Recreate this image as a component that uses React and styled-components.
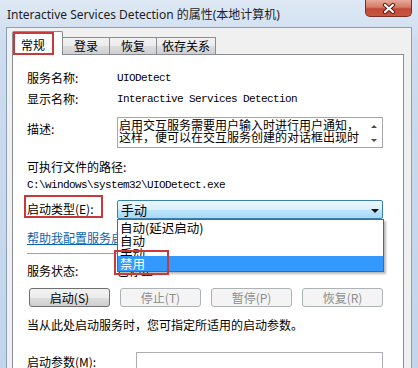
import React from "react";
import styled, { createGlobalStyle } from "styled-components";

const GlobalStyle = createGlobalStyle`
  html, body {
    margin: 0;
    padding: 0;
    overflow: hidden;
  }
  body {
    width: 418px;
    height: 368px;
    font-family: "Noto Sans CJK SC", "Noto Sans", sans-serif;
    font-size: 12px;
    color: #000;
  }
`;

const Window = styled.div`
  width: 418px;
  height: 368px;
  display: flex;
  flex-direction: column;
  background: linear-gradient(to bottom, #dfe9f5 0%, #cddcee 12%, #c2d5eb 100%);
  overflow: hidden;
`;

const TitleBar = styled.div`
  height: 27px;
  flex: none;
  display: flex;
  justify-content: space-between;
  align-items: flex-start;
  padding-left: 7px;
`;

const Title = styled.span`
  font-family: "Noto Sans", "Noto Sans CJK SC", sans-serif;
  font-size: 12px;
  line-height: 14px;
  margin-top: 8px;
  color: #1e1e1e;
`;

const CloseButton = styled.div`
  width: 47px;
  height: 17px;
  margin-right: 6px;
  box-sizing: border-box;
  border: 1px solid #7a3026;
  border-top: none;
  border-radius: 0 0 5px 5px;
  background: linear-gradient(to bottom, #e9a99b 0%, #d57a68 45%, #c24a37 55%, #c8563f 100%);
  display: flex;
  align-items: center;
  justify-content: center;
`;

const Client = styled.div`
  flex: 1;
  margin: 0 6px;
  border: 1px solid #8a9fb8;
  background: #f0f0f0;
  display: flex;
  flex-direction: column;
  padding: 0 7px 0 5px;
`;

const TabStrip = styled.div`
  display: flex;
  align-items: flex-end;
  height: 26px;
  flex: none;
`;

const Tab = styled.div`
  box-sizing: border-box;
  width: ${({ $w }) => $w}px;
  height: 17px;
  border: 1px solid #898c95;
  border-bottom: none;
  border-left: none;
  background: linear-gradient(to bottom, #f2f2f2 0%, #ebebeb 50%, #dddddd 51%, #cfcfcf 100%);
  display: flex;
  align-items: center;
  justify-content: center;
  line-height: 14px;
`;

const ActiveTab = styled.div`
  box-sizing: border-box;
  width: 51px;
  height: 24px;
  margin-bottom: -1px;
  position: relative;
  z-index: 1;
  border: 1px solid #898c95;
  border-bottom: none;
  border-radius: 2px 2px 0 0;
  background: #fff;
  display: flex;
  align-items: flex-start;
`;

const MarkBox = styled.span`
  box-sizing: border-box;
  border: 2px solid #c9393c;
  display: inline-flex;
  align-items: center;
`;

const TabMark = styled(MarkBox)`
  width: 41px;
  height: 23px;
  padding-left: 6px;
  padding-top: 2px;
  line-height: 14px;
`;

const Panel = styled.div`
  flex: 1;
  background: #fff;
  border: 1px solid #898c95;
  padding: 0 20px 0 14px;
  display: flex;
  flex-direction: column;
`;

const Row = styled.div`
  display: flex;
  align-items: ${({ $align }) => $align || "center"};
  margin-top: ${({ $mt }) => $mt}px;
  line-height: 14px;
`;

const Label = styled.div`
  width: ${({ $w }) => $w || 90}px;
  flex: none;
  padding-top: ${({ $pt }) => $pt || 0}px;
  white-space: nowrap;
`;

const Mono = styled.span`
  font-family: "Liberation Mono", "DejaVu Sans Mono", monospace;
  font-size: 11px;
  letter-spacing: -0.6px;
  line-height: 14px;
  white-space: nowrap;
`;

const TextLine = styled.div`
  margin-top: ${({ $mt }) => $mt}px;
  line-height: 14px;
  white-space: nowrap;
`;

const DescBox = styled.div`
  flex: 1;
  height: 31px;
  box-sizing: border-box;
  border: 1px solid #a5a7ad;
  display: flex;
  background: #fff;
`;

const DescText = styled.div`
  flex: 1;
  padding: 1px 0 0 1px;
  font-size: 12px;
  line-height: 12px;
  white-space: nowrap;
`;

const ScrollCol = styled.div`
  width: 17px;
  display: flex;
  flex-direction: column;
  justify-content: space-between;
  align-items: center;
  padding: 7px 0 5px;
`;

const Arrow = styled.div`
  width: 0;
  height: 0;
  border-left: 3px solid transparent;
  border-right: 3px solid transparent;
  ${({ $up }) =>
    $up ? "border-bottom: 3px solid #4d4d4d;" : "border-top: 3px solid #4d4d4d;"}
`;

const StartLabel = styled(MarkBox)`
  height: 23px;
  width: 79px;
  margin-left: -3px;
  padding: 5px 0 0 1px;
  line-height: 14px;
  white-space: nowrap;
`;

const ComboWrap = styled.div`
  position: relative;
  flex: 1;
  margin-left: 14px;
  margin-top: 5px;
`;

const Combo = styled.div`
  height: 19px;
  box-sizing: border-box;
  border: 1px solid #3c7fb1;
  border-radius: 2px;
  background: linear-gradient(to bottom, #eaf6fd 0%, #d9f0fc 50%, #bee6fd 51%, #a7d9f5 100%);
  display: flex;
  align-items: center;
  justify-content: space-between;
  padding: 0 3px 0 3px;
  font-size: 13px;
  line-height: 16px;
`;

const DownArrow = styled.div`
  width: 0;
  height: 0;
  border-left: 4px solid transparent;
  border-right: 4px solid transparent;
  border-top: 4px solid #111;
  margin-top: 2px;
`;

const DropList = styled.div`
  position: absolute;
  top: 100%;
  left: 0;
  width: 267px;
  box-sizing: border-box;
  border: 1px solid #646464;
  background: #fff;
  box-shadow: 2px 2px 2px rgba(0, 0, 0, 0.28);
  padding-top: 1px;
  z-index: 5;
`;

const Option = styled.div`
  height: ${({ $h }) => $h || 13}px;
  line-height: ${({ $h }) => $h || 13}px;
  padding-left: 2px;
  font-size: 12.5px;
  white-space: nowrap;
  ${({ $selected }) =>
    $selected &&
    `
    position: relative;
    margin-top: -4px;
    background: #3399ff;
    color: #fff;
  `}
`;

const OptionMark = styled.div`
  position: absolute;
  left: -4px;
  top: 30px;
  width: 55px;
  height: 25px;
  box-sizing: border-box;
  border: 2px solid #c9393c;
`;

const HelpLink = styled.a`
  color: #0b66b0;
  text-decoration: underline;
  white-space: nowrap;
`;

const Separator = styled.div`
  height: 1px;
  margin-top: 8px;
  background: #a0a0a0;
`;

const ButtonRow = styled.div`
  display: flex;
  gap: 10px;
  margin-top: 10px;
  padding-left: 2px;
`;

const Button = styled.div`
  width: 81px;
  height: 19px;
  box-sizing: border-box;
  border: 1px solid ${({ $disabled }) => ($disabled ? "#adb2b5" : "#707070")};
  border-radius: 3px;
  background: ${({ $disabled }) =>
    $disabled
      ? "#f4f4f4"
      : "linear-gradient(to bottom, #f2f2f2 0%, #ebebeb 50%, #dddddd 51%, #cfcfcf 100%)"};
  color: ${({ $disabled }) => ($disabled ? "#8d8d8d" : "#000")};
  display: flex;
  align-items: center;
  justify-content: center;
  line-height: 14px;
`;

const ParamInput = styled.div`
  flex: 1;
  height: 20px;
  box-sizing: border-box;
  border: 1px solid #abadb3;
  background: #fff;
`;

const CloseGlyph = () => (
  <svg width="14" height="11" viewBox="0 0 14 11">
    <path d="M3 2 L11 9 M11 2 L3 9" stroke="#5a1b14" strokeWidth="4.2" strokeLinecap="round" />
    <path d="M3 2 L11 9 M11 2 L3 9" stroke="#ffffff" strokeWidth="2.2" strokeLinecap="round" />
  </svg>
);

export default function App() {
  return (
    <>
      <GlobalStyle />
      <Window>
        <TitleBar>
          <Title>Interactive Services Detection 的属性(本地计算机)</Title>
          <CloseButton>
            <CloseGlyph />
          </CloseButton>
        </TitleBar>
        <Client>
          <TabStrip>
            <ActiveTab>
              <TabMark>常规</TabMark>
            </ActiveTab>
            <Tab $w={47}>登录</Tab>
            <Tab $w={47}>恢复</Tab>
            <Tab $w={59}>依存关系</Tab>
          </TabStrip>
          <Panel>
            <Row $mt={16}>
              <Label>服务名称:</Label>
              <Mono>UIODetect</Mono>
            </Row>
            <Row $mt={7}>
              <Label>显示名称:</Label>
              <Mono>Interactive Services Detection</Mono>
            </Row>
            <Row $mt={11} $align="flex-start">
              <Label $pt={5}>描述:</Label>
              <DescBox>
                <DescText>
                  启用交互服务需要用户输入时进行用户通知，
                  <br />
                  这样，便可以在交互服务创建的对话框出现时
                </DescText>
                <ScrollCol>
                  <Arrow $up />
                  <Arrow />
                </ScrollCol>
              </DescBox>
            </Row>
            <TextLine $mt={12}>可执行文件的路径:</TextLine>
            <TextLine $mt={2}>
              <Mono>C:\windows\system32\UIODetect.exe</Mono>
            </TextLine>
            <Row $mt={3} $align="flex-start">
              <StartLabel>启动类型(E):</StartLabel>
              <ComboWrap>
                <Combo>
                  <span>手动</span>
                  <DownArrow />
                </Combo>
                <DropList>
                  <Option>自动(延迟启动)</Option>
                  <Option>自动</Option>
                  <Option>手动</Option>
                  <Option $selected $h={15}>
                    禁用
                  </Option>
                  <OptionMark />
                </DropList>
              </ComboWrap>
            </Row>
            <TextLine $mt={12}>
              <HelpLink>帮助我配置服务启动选项。</HelpLink>
            </TextLine>
            <Separator />
            <Row $mt={10}>
              <Label>服务状态:</Label>
              <span>已停止</span>
            </Row>
            <ButtonRow>
              <Button>启动(S)</Button>
              <Button $disabled>停止(T)</Button>
              <Button $disabled>暂停(P)</Button>
              <Button $disabled>恢复(R)</Button>
            </ButtonRow>
            <TextLine $mt={11}>当从此处启动服务时，您可指定所适用的启动参数。</TextLine>
            <Row $mt={20}>
              <Label $w={109}>启动参数(M):</Label>
              <ParamInput />
            </Row>
          </Panel>
        </Client>
      </Window>
    </>
  );
}
